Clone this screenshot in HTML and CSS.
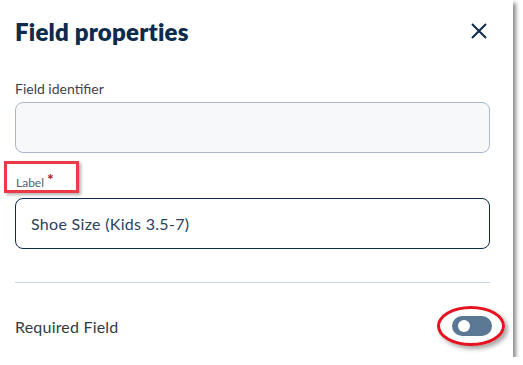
FILE: index.html
```html
<!DOCTYPE html>
<html lang="en">
  <head>
    <meta charset="UTF-8" />
    <title>Field properties</title>
    <link rel="stylesheet" href="styles.css">
  </head>
  <body>
    <div class="panel">
      <div class="header">
        <h1 class="title">Field properties</h1>
        <button class="close" aria-label="Close">
          <svg width="18" height="18" viewBox="0 0 18 18">
            <path d="M2 2 L16 16 M16 2 L2 16" stroke="#0d2b4c" stroke-width="2" fill="none" />
          </svg>
        </button>
      </div>

      <div class="field">
        <label class="lbl">Field identifier</label>
        <input type="text" class="box box-empty" />
      </div>

      <div class="field">
        <label class="lbl lbl-small mark">Label <span class="req">*</span></label>
        <input type="text" class="box box-active" value="Shoe Size (Kids 3.5-7)" />
      </div>

      <hr class="divider" />

      <div class="row">
        <span class="row-text">Required Field</span>
        <span class="toggle-wrap">
          <span class="toggle"><span class="knob"></span></span>
        </span>
      </div>
    </div>
  </body>
</html>
```

FILE: styles.css
```css
body {
  margin: 0;
  background: #fff;
  font-family: Lato, "Open Sans", sans-serif;
}
.panel {
  width: 513px;
  height: 357px;
  box-sizing: border-box;
  padding: 0 23px 0 15px;
  background: #fff;
  box-shadow: 3px 3px 4px rgba(0, 0, 0, 0.45);
}
.header {
  display: flex;
  justify-content: space-between;
  align-items: center;
  height: 62px;
}
.title {
  margin: 0;
  font-size: 24px;
  font-weight: 800;
  color: #0d2b4c;
  letter-spacing: 0.2px;
}
.close {
  border: none;
  background: none;
  padding: 0;
  margin-right: 2px;
  width: 18px;
  height: 18px;
  cursor: pointer;
}
.field {
  display: flex;
  flex-direction: column;
}
.lbl {
  font-size: 14px;
  color: #3d4450;
  height: 40px;
  line-height: 54px;
}
.lbl-small {
  font-size: 12px;
  color: #56606d;
  line-height: 52px;
  height: 45px;
  padding-left: 1px;
}
.mark {
  position: relative;
}
.mark::before {
  content: "";
  position: absolute;
  left: -11px;
  top: 8px;
  width: 69px;
  height: 26px;
  border: 3px solid #ec3b46;
  box-shadow: 2px 2px 3px rgba(0, 0, 0, 0.3);
}
.req {
  color: #b8102a;
  font-size: 16px;
  font-weight: 700;
  vertical-align: 2px;
}
.box {
  box-sizing: border-box;
  width: 475px;
  height: 51px;
  border-radius: 8px;
  font-family: inherit;
  font-size: 16px;
  padding: 0 15px;
  outline: none;
}
.box-empty {
  border: 1px solid #a8b8c9;
  background: #f6f8fa;
}
.box-active {
  border: 1.5px solid #0d2b4c;
  background: #fff;
  color: #2a4260;
  letter-spacing: 0.3px;
}
.divider {
  margin: 33px 0 0;
  border: none;
  border-top: 1px solid #c3d2dd;
  width: 475px;
}
.row {
  display: flex;
  justify-content: space-between;
  align-items: center;
  height: 86px;
}
.row-text {
  font-size: 16px;
  color: #333a44;
  letter-spacing: 0.2px;
}
.toggle-wrap {
  position: relative;
  display: flex;
  margin-right: -2px;
}
.toggle-wrap::before {
  content: "";
  position: absolute;
  left: -15px;
  top: -10px;
  width: 62px;
  height: 34px;
  border: 3px solid #e5121f;
  border-radius: 50%;
  box-shadow: 3px 3px 4px rgba(0, 0, 0, 0.35);
}
.toggle {
  position: relative;
  width: 40px;
  height: 20px;
  border-radius: 10px;
  background: #5a7894;
}
.knob {
  position: absolute;
  left: 6px;
  top: 4px;
  width: 12px;
  height: 12px;
  border-radius: 50%;
  background: #fff;
}
```
